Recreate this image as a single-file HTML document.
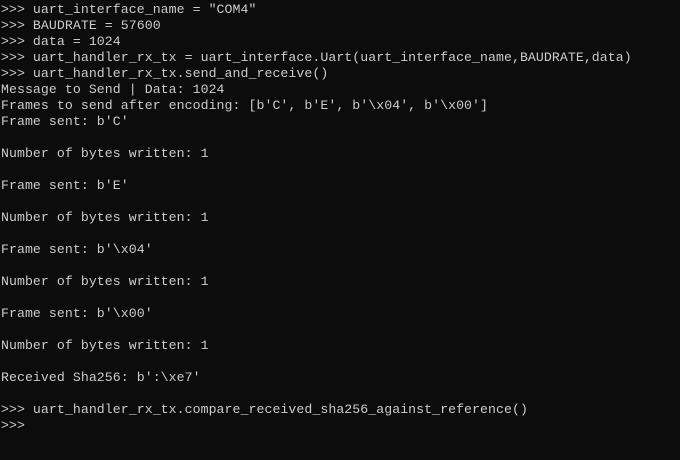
<!DOCTYPE html>
<html><head><meta charset="utf-8"><style>
html,body{margin:0;padding:0;background:#0c0c0c;width:680px;height:460px;overflow:hidden}
pre{margin:0;padding:2px 0 0 1px;font-family:"Liberation Mono",monospace;font-size:13.2px;letter-spacing:0.07px;line-height:16px;color:#cccccc;white-space:pre}
</style></head><body><pre>&gt;&gt;&gt; uart_interface_name = "COM4"
&gt;&gt;&gt; BAUDRATE = 57600
&gt;&gt;&gt; data = 1024
&gt;&gt;&gt; uart_handler_rx_tx = uart_interface.Uart(uart_interface_name,BAUDRATE,data)
&gt;&gt;&gt; uart_handler_rx_tx.send_and_receive()
Message to Send | Data: 1024
Frames to send after encoding: [b'C', b'E', b'\x04', b'\x00']
Frame sent: b'C'

Number of bytes written: 1

Frame sent: b'E'

Number of bytes written: 1

Frame sent: b'\x04'

Number of bytes written: 1

Frame sent: b'\x00'

Number of bytes written: 1

Received Sha256: b':\xe7'

&gt;&gt;&gt; uart_handler_rx_tx.compare_received_sha256_against_reference()
&gt;&gt;&gt;</pre></body></html>
